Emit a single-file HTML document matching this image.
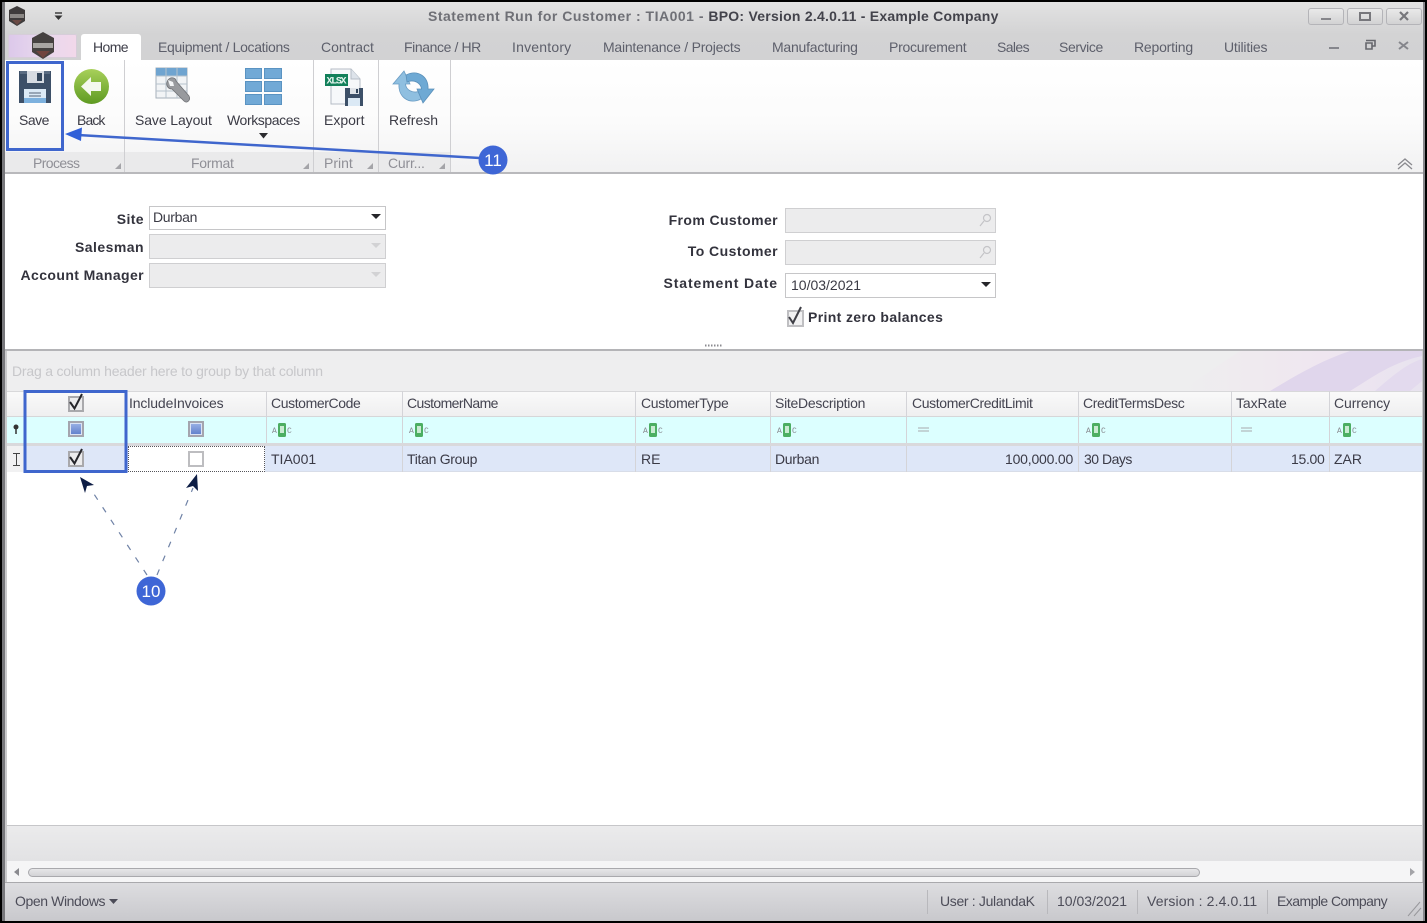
<!DOCTYPE html>
<html><head><meta charset="utf-8"><title>Statement Run</title>
<style>
html,body{margin:0;padding:0;background:#000}
#p{position:relative;width:1427px;height:923px;overflow:hidden;background:#000;font-family:"Liberation Sans",sans-serif;font-size:14px;color:#3b3b45;filter:blur(.35px)}
#p div,#p span.t{position:absolute}
.t{white-space:nowrap;line-height:16px}
.tab{color:#5d5f6b}
.lb{font-weight:bold;color:#33333d;letter-spacing:.4px;text-align:right}
.h{color:#444450;top:395px}
.c{color:#3a3a46;top:451px}
.g{color:#8f8f96;top:155px}
.s{color:#4c4c58;top:893px}
.vl{width:1px;background:#d4d4d8}
svg{position:absolute;overflow:visible}
</style></head><body><div id="p">
<!-- frame -->
<div style="left:2px;top:2px;width:1423px;height:919px;background:#c9c9cb"></div>
<div style="left:2px;top:2px;width:1423px;height:32px;background:linear-gradient(#e2e2e2,#d3d3d4)"></div>
<div style="left:2px;top:34px;width:1423px;height:26px;background:linear-gradient(#d3d3d4,#d2d2d3)"></div>
<div style="left:2px;top:2px;width:3px;height:919px;background:#77777b"></div>
<div style="left:1423px;top:2px;width:2px;height:919px;background:#88888c"></div>
<!-- title -->
<svg style="left:8px;top:6px" width="20" height="20" viewBox="0 0 20 20"><path d="M9 0L17 4V15L9 20L1 15V4Z" fill="#3f3c3c"/><path d="M2 8H16V12H2Z" fill="#8b8885"/><path d="M4 14H14L9 19Z" fill="#6b4a44"/></svg>
<svg style="left:54px;top:12px" width="9" height="9" viewBox="0 0 9 9"><path d="M1 1H8" stroke="#333" stroke-width="1.4"/><path d="M0.5 3.5H8.5L4.5 8Z" fill="#333"/></svg>
<span class="t" style="left:428px;top:8px;font-weight:bold;color:#6f7076;font-size:14px;letter-spacing:.5px">Statement Run for Customer : TIA001 - <span style="color:#43434b;letter-spacing:.24px">BPO: Version 2.4.0.11 - Example Company</span></span>
<!-- window buttons -->
<div style="left:1308px;top:8px;width:34px;height:15px;border:1px solid #b4b4b8;border-radius:3px;background:linear-gradient(#e9e9e9,#d2d2d3)"></div>
<div style="left:1321px;top:18px;width:10px;height:2px;background:#85858a"></div>
<div style="left:1347px;top:8px;width:34px;height:15px;border:1px solid #b4b4b8;border-radius:3px;background:linear-gradient(#e9e9e9,#d2d2d3)"></div>
<div style="left:1359px;top:12px;width:8px;height:5px;border:2px solid #77777c"></div>
<div style="left:1386px;top:8px;width:34px;height:15px;border:1px solid #b4b4b8;border-radius:3px;background:linear-gradient(#e9e9e9,#d2d2d3)"></div>
<svg style="left:1399px;top:11px" width="10" height="10" viewBox="0 0 10 10"><path d="M1 1L9 9M9 1L1 9" stroke="#77777c" stroke-width="2.2"/></svg>
<svg style="left:1329px;top:38px" width="90" height="14" viewBox="0 0 90 14"><path d="M0 10H10" stroke="#85868c" stroke-width="2"/><path d="M37 2.5H46V8H43M37 5V11H43V5Z" fill="none" stroke="#66676d" stroke-width="1.6"/><path d="M70 4L79 11M79 4L70 11" stroke="#85868c" stroke-width="2"/></svg>
<!-- app button & tabs -->
<div style="left:8px;top:34px;width:69px;height:24px;background:linear-gradient(90deg,#dcc8ea,#e8d8ee 50%,#f2d8ea);border-radius:2px 2px 0 0;box-shadow:inset 0 0 0 1px #d6cdd9"></div>
<svg style="left:30px;top:32px" width="26" height="27" viewBox="0 0 26 27"><path d="M13 0L24 6V20L13 27L2 20V6Z" fill="#454140"/><path d="M3 11H23V16H3Z" fill="#a8a5a2"/><path d="M6 19H20L13 26Z" fill="#70443e"/></svg>
<div style="left:81px;top:34px;width:60px;height:27px;background:#fff;border-radius:3px 3px 0 0"></div>
<span class="t" style="left:93px;top:39px;color:#3d3d48;letter-spacing:-.6px">Home</span>
<span class="t tab" style="left:158px;top:39px;letter-spacing:-.33px">Equipment / Locations</span>
<span class="t tab" style="left:321px;top:39px">Contract</span>
<span class="t tab" style="left:404px;top:39px;letter-spacing:-.4px">Finance / HR</span>
<span class="t tab" style="left:512px;top:39px;letter-spacing:.2px">Inventory</span>
<span class="t tab" style="left:603px;top:39px;letter-spacing:-.23px">Maintenance / Projects</span>
<span class="t tab" style="left:772px;top:39px;letter-spacing:-.23px">Manufacturing</span>
<span class="t tab" style="left:889px;top:39px;letter-spacing:-.25px">Procurement</span>
<span class="t tab" style="left:997px;top:39px;letter-spacing:-.6px">Sales</span>
<span class="t tab" style="left:1059px;top:39px;letter-spacing:-.4px">Service</span>
<span class="t tab" style="left:1134px;top:39px;letter-spacing:-.2px">Reporting</span>
<span class="t tab" style="left:1224px;top:39px;letter-spacing:-.2px">Utilities</span>
<!-- ribbon -->
<div style="left:5px;top:60px;width:1418px;height:113px;background:linear-gradient(#ffffff 0,#fbfbfb 55%,#f1f1f2 100%)"></div>
<div style="left:5px;top:152px;width:446px;height:20px;background:#eaeaeb"></div>
<div style="left:5px;top:172px;width:1418px;height:2px;background:#b9b9bc"></div>
<div class="vl" style="left:124px;top:60px;height:112px;background:#cfcfd2"></div>
<div class="vl" style="left:313px;top:60px;height:112px;background:#cfcfd2"></div>
<div class="vl" style="left:378px;top:60px;height:112px;background:#cfcfd2"></div>
<div class="vl" style="left:450px;top:60px;height:112px;background:#cfcfd2"></div>
<!-- save icon -->
<svg style="left:18px;top:70px" width="34" height="34" viewBox="0 0 34 34"><path d="M1 1H33V33H1Z" fill="#3d5068"/><path d="M2 1H32V4H2Z" fill="#5a6c82"/><path d="M9 1H26V13H9Z" fill="#d6dbe2"/><path d="M19 3H24V11H19Z" fill="#33465c"/><path d="M6 19H28V33H6Z" fill="#dbe9f5"/><path d="M6 28H28V33H6Z" fill="#7db1de"/><path d="M11 23H23M11 26H23" stroke="#6f7f91" stroke-width="1.3"/></svg>
<!-- back icon -->
<svg style="left:73px;top:68px" width="37" height="37" viewBox="0 0 37 37"><defs><linearGradient id="g1" x1="0" y1="0" x2="0" y2="1"><stop offset="0" stop-color="#a8d05a"/><stop offset="1" stop-color="#5e9a22"/></linearGradient></defs><circle cx="18.500" cy="18.500" r="17.500" fill="url(#g1)"/><path d="M8 18.500L18 9V14H28V23H18V28Z" fill="#f4f8ee"/></svg>
<!-- save layout icon -->
<svg style="left:155px;top:67px" width="38" height="38" viewBox="0 0 38 38"><path d="M1 1H32V31H1Z" fill="#f2f4f6" stroke="#a6b0ba"/><path d="M1 1H32V9H1Z" fill="#6fa4d0"/><path d="M11 1V31M22 1V31M1 9H32M1 17H32M1 24H32" stroke="#b6c2cc" fill="none"/><path d="M13 13C16 9 21 11 21 14L34 29C36 33 32 37 29 34L17 22C13 22 10 18 13 13Z" fill="#989a9e" stroke="#6f7175" stroke-width=".8"/><path d="M13 13L18 15L19 19L15 19Z" fill="#f2f4f6"/></svg>
<!-- workspaces icon -->
<svg style="left:245px;top:68px" width="37" height="37" viewBox="0 0 37 37"><g fill="#71a9d6" stroke="#5a93c2"><path d="M.5 .5H16.500V10.500H.5Z"/><path d="M19.500 .5H36.500V10.500H19.500Z"/><path d="M.5 13.500H16.500V23.500H.5Z"/><path d="M19.500 13.500H36.500V23.500H19.500Z"/><path d="M.5 26.500H16.500V36.500H.5Z"/><path d="M19.500 26.500H36.500V36.500H19.500Z"/></g></svg>
<svg style="left:259px;top:133px" width="9" height="6" viewBox="0 0 9 6"><path d="M0 0H9L4.500 5.500Z" fill="#2c2c30"/></svg>
<!-- export icon -->
<svg style="left:325px;top:68px" width="39" height="38" viewBox="0 0 39 38"><path d="M6 1H26L35 11V36H6Z" fill="#f6f8fa" stroke="#b5bcc5"/><path d="M26 1V11H35" fill="#dde3ea" stroke="#b5bcc5"/><rect x="0" y="6" width="23" height="12" fill="#12805a"/><text x="1.500" y="15.500" font-family="Liberation Mono,monospace" font-size="10" font-weight="bold" fill="#e6f5ef" textLength="20">XLSX</text><path d="M20 20H38V38H20Z" fill="#3d5068"/><path d="M25 20H34V26H25Z" fill="#e0e4e9"/><path d="M31 21H33V25H31Z" fill="#33465c"/><path d="M23 30H35V38H23Z" fill="#dbe9f5"/></svg>
<!-- refresh icon -->
<svg style="left:393px;top:70px" width="41" height="34" viewBox="0 0 41 34"><path d="M0 14L11 1L17 14H12.500C13 20 20 24 27 21L28 29C16 35 5 27 6 14Z" fill="#8fbfe0" stroke="#6a9cc4" stroke-width=".8"/><path d="M41 19L30 33L24 19H28.500C28 13 21 9 14 12L13 5C25 -1 36 7 35 19Z" fill="#6ea9d4" stroke="#5a90ba" stroke-width=".8"/></svg>
<span class="t" style="left:19px;top:112px;letter-spacing:-.5px">Save</span>
<span class="t" style="left:77px;top:112px;letter-spacing:-.9px">Back</span>
<span class="t" style="left:135px;top:112px;letter-spacing:-.1px">Save Layout</span>
<span class="t" style="left:227px;top:112px;letter-spacing:-.4px">Workspaces</span>
<span class="t" style="left:324px;top:112px">Export</span>
<span class="t" style="left:389px;top:112px">Refresh</span>
<span class="t g" style="left:33px;letter-spacing:-.6px">Process</span>
<span class="t g" style="left:191px;letter-spacing:-.3px">Format</span>
<span class="t g" style="left:324px">Print</span>
<span class="t g" style="left:388px;letter-spacing:-.2px">Curr...</span>
<svg style="left:0;top:0" width="1427" height="180"><g fill="#a4a4a8"><path d="M121 163V169H115Z"/><path d="M309 163V169H303Z"/><path d="M373 163V169H367Z"/><path d="M445 163V169H439Z"/></g><path d="M1398 165L1405 159L1412 165M1398 169L1405 163L1412 169" fill="none" stroke="#8a8a8f" stroke-width="1.300"/></svg>
<!-- form -->
<div style="left:5px;top:174px;width:1418px;height:175px;background:#fff"></div>
<div style="left:5px;top:349px;width:1418px;height:2px;background:#b4b4b7"></div>
<span class="t lb" style="left:44px;width:100px;top:211px">Site</span>
<span class="t lb" style="left:44px;width:100px;top:239px;letter-spacing:.45px">Salesman</span>
<span class="t lb" style="left:4px;width:140px;top:267px">Account Manager</span>
<div style="left:149px;top:206px;width:235px;height:22px;border:1px solid #c6c6c8;background:#fff"></div>
<span class="t" style="left:153px;top:209px;letter-spacing:-.3px">Durban</span>
<svg style="left:371px;top:214px" width="10" height="6"><path d="M0 0H10L5 5Z" fill="#26262a"/></svg>
<div style="left:149px;top:234px;width:235px;height:23px;border:1px solid #cfcfd1;background:#ececed"></div>
<svg style="left:371px;top:243px" width="10" height="6"><path d="M0 0H10L5 5Z" fill="#d2d2d4"/></svg>
<div style="left:149px;top:263px;width:235px;height:23px;border:1px solid #cfcfd1;background:#ececed"></div>
<svg style="left:371px;top:272px" width="10" height="6"><path d="M0 0H10L5 5Z" fill="#d2d2d4"/></svg>
<span class="t lb" style="left:618px;width:160px;top:212px;letter-spacing:.4px">From Customer</span>
<span class="t lb" style="left:618px;width:160px;top:243px;letter-spacing:.45px">To Customer</span>
<span class="t lb" style="left:618px;width:160px;top:275px;letter-spacing:.9px">Statement Date</span>
<div style="left:785px;top:208px;width:209px;height:23px;border:1px solid #cfcfd1;background:#ececed"></div>
<div style="left:785px;top:240px;width:209px;height:23px;border:1px solid #cfcfd1;background:#ececed"></div>
<svg style="left:978px;top:213px" width="14" height="46" viewBox="0 0 14 46" fill="none" stroke="#c4c4c7" stroke-width="1.2"><circle cx="9" cy="5" r="3.500"/><path d="M6 8L2 13"/><circle cx="9" cy="37" r="3.500"/><path d="M6 40L2 45"/></svg>
<div style="left:785px;top:273px;width:209px;height:23px;border:1px solid #c6c6c8;background:#fff"></div>
<span class="t" style="left:791px;top:277px">10/03/2021</span>
<svg style="left:981px;top:282px" width="10" height="6"><path d="M0 0H10L5 5Z" fill="#26262a"/></svg>
<div style="left:787px;top:310px;width:13px;height:13px;border:2px solid #bfbfc2;background:#f1f1f2"></div>
<svg style="left:786px;top:306px" width="18" height="20" viewBox="0 0 18 20"><path d="M3 11L7 17L15 1" fill="none" stroke="#3f3f46" stroke-width="2"/></svg>
<span class="t lb" style="left:808px;top:309px;letter-spacing:.36px">Print zero balances</span>
<svg style="left:705px;top:344px" width="18" height="4"><path d="M0 1.500H17" stroke="#8b8b90" stroke-width="2" stroke-dasharray="1.500 1.500"/></svg>
<!-- grid -->
<div style="left:7px;top:351px;width:1415px;height:40px;background:#eeeeef"></div>
<svg style="left:1180px;top:351px" width="242" height="40" viewBox="0 0 242 40"><defs><linearGradient id="g2" x1="0" y1="0" x2="1" y2="0"><stop offset="0" stop-color="#f1e6ee" stop-opacity="0"/><stop offset=".6" stop-color="#efe6f0"/><stop offset="1" stop-color="#e8e3ef"/></linearGradient></defs><path d="M0 40L60 0H242V40Z" fill="url(#g2)"/><path d="M90 40C115 25 140 10 170 0H242V5C210 12 190 28 170 40Z" fill="#e0d6ec"/><path d="M195 40C212 25 228 12 242 8V30L230 40Z" fill="#e3daee"/></svg>
<span class="t" style="left:12px;top:363px;color:#c7c7ca;letter-spacing:-.2px">Drag a column header here to group by that column</span>
<div style="left:7px;top:391px;width:1415px;height:25px;background:linear-gradient(#fafafa,#efeff0);box-shadow:inset 0 1px 0 #d8d8da"></div>
<div style="left:7px;top:416px;width:1415px;height:27px;background:#dcffff;border-top:1px solid #d6d6d8;box-sizing:border-box"></div>
<div style="left:7px;top:443px;width:1415px;height:3px;background:#d9d9dc"></div>
<div style="left:7px;top:446px;width:1415px;height:26px;background:#dee7f8;border-bottom:1px solid #d8dde8;box-sizing:border-box"></div>
<div style="left:7px;top:472px;width:1415px;height:353px;background:#fff"></div>
<div style="left:7px;top:446px;width:18px;height:26px;background:#f1f1f2"></div>
<div style="left:128px;top:446px;width:137px;height:26px;background:#fff;outline:1px dotted #55555a;outline-offset:-1px"></div>
<div class="vl" style="left:266px;top:391px;height:52px"></div><div class="vl" style="left:402px;top:391px;height:52px"></div><div class="vl" style="left:635px;top:391px;height:52px"></div><div class="vl" style="left:770px;top:391px;height:52px"></div><div class="vl" style="left:906px;top:391px;height:52px"></div><div class="vl" style="left:1078px;top:391px;height:52px"></div><div class="vl" style="left:1231px;top:391px;height:52px"></div><div class="vl" style="left:1329px;top:391px;height:52px"></div>
<div class="vl" style="left:402px;top:446px;height:26px"></div><div class="vl" style="left:635px;top:446px;height:26px"></div><div class="vl" style="left:770px;top:446px;height:26px"></div><div class="vl" style="left:906px;top:446px;height:26px"></div><div class="vl" style="left:1078px;top:446px;height:26px"></div><div class="vl" style="left:1231px;top:446px;height:26px"></div><div class="vl" style="left:1329px;top:446px;height:26px"></div>
<span class="t h" style="left:129px;letter-spacing:-.13px">IncludeInvoices</span>
<span class="t h" style="left:271px;letter-spacing:-.4px">CustomerCode</span>
<span class="t h" style="left:407px;letter-spacing:-.6px">CustomerName</span>
<span class="t h" style="left:641px;letter-spacing:-.3px">CustomerType</span>
<span class="t h" style="left:775px;letter-spacing:-.27px">SiteDescription</span>
<span class="t h" style="left:912px;letter-spacing:-.37px">CustomerCreditLimit</span>
<span class="t h" style="left:1083px;letter-spacing:-.4px">CreditTermsDesc</span>
<span class="t h" style="left:1236px;letter-spacing:-.1px">TaxRate</span>
<span class="t h" style="left:1334px;letter-spacing:-.1px">Currency</span>
<span class="t c" style="left:271px">TIA001</span>
<span class="t c" style="left:407px;letter-spacing:-.3px">Titan Group</span>
<span class="t c" style="left:641px">RE</span>
<span class="t c" style="left:775px;letter-spacing:-.3px">Durban</span>
<span class="t c" style="left:1005px;letter-spacing:-.2px">100,000.00</span>
<span class="t c" style="left:1084px;letter-spacing:-.5px">30 Days</span>
<span class="t c" style="left:1291px;letter-spacing:-.3px">15.00</span>
<span class="t c" style="left:1334px">ZAR</span>
<!-- abc filter icons -->
<svg style="left:0;top:416px" width="1427" height="27">
<defs><g id="abc"><rect x="7" y="7" width="8" height="14" rx="1.500" fill="#4cae62"/><rect x="9" y="10" width="4" height="7" fill="#c9ebd2"/><text x="1" y="17" font-family="Liberation Mono,monospace" font-size="8" fill="#86868c">A</text><text x="16" y="17" font-family="Liberation Mono,monospace" font-size="8" fill="#86868c">C</text></g></defs>
<use href="#abc" x="271"/><use href="#abc" x="408"/><use href="#abc" x="642"/><use href="#abc" x="776"/><use href="#abc" x="1085"/><use href="#abc" x="1336"/>
<path d="M918 12H929M918 15H929M1241 12H1252M1241 15H1252" stroke="#a8a8ac" stroke-width="1"/>
<circle cx="16" cy="11" r="2.500" fill="#333"/><path d="M16 12V18" stroke="#333" stroke-width="1.500"/>
</svg>
<svg style="left:12px;top:453px" width="9" height="13"><path d="M1 .5H8M4.500 .5V12.500M1 12.500H8" stroke="#444" fill="none"/></svg>
<!-- checkboxes -->
<div style="left:68px;top:396px;width:12px;height:12px;border:2px solid #a9a9ac;background:#ececed"></div>
<svg style="left:68px;top:393px" width="18" height="18" viewBox="0 0 18 18"><path d="M2 9L6.500 15.500L14 1" fill="none" stroke="#26262b" stroke-width="2"/></svg>
<div style="left:68px;top:451px;width:12px;height:12px;border:2px solid #a9a9ac;background:#ececed"></div>
<svg style="left:68px;top:448px" width="18" height="18" viewBox="0 0 18 18"><path d="M2 9L6.500 15.500L14 1" fill="none" stroke="#26262b" stroke-width="2"/></svg>
<div style="left:68px;top:421px;width:12px;height:12px;border:2px solid #a4a5ae;background:linear-gradient(#9ab2e6,#5f7fca);box-shadow:inset 0 0 0 1px #dbe3f5"></div>
<div style="left:188px;top:421px;width:12px;height:12px;border:2px solid #a4a5ae;background:linear-gradient(#9ab2e6,#5f7fca);box-shadow:inset 0 0 0 1px #dbe3f5"></div>
<div style="left:188px;top:451px;width:12px;height:12px;border:2px solid #bdbdc0;background:#fff"></div>
<!-- footer -->
<div style="left:7px;top:825px;width:1415px;height:36px;background:linear-gradient(#ebebec,#e2e2e4);border-top:1px solid #c6c6c9;box-sizing:border-box"></div>
<div style="left:7px;top:861px;width:1415px;height:21px;background:#f5f5f6"></div>
<div style="left:5px;top:882px;width:1418px;height:1px;background:#a9a9ac"></div>
<div style="left:28px;top:868px;width:1170px;height:7px;border:1px solid #a9a9ad;border-radius:5px;background:linear-gradient(#e6e6e8,#d3d3d6)"></div>
<svg style="left:0;top:860px" width="1427" height="24"><path d="M19 8V16L14 12Z" fill="#8a8a8f"/><path d="M1410 8V16L1415 12Z" fill="#a4a4a8"/></svg>
<!-- status -->
<div style="left:5px;top:883px;width:1418px;height:37px;background:linear-gradient(#dddde0,#c9c9cd)"></div>
<span class="t s" style="left:15px;letter-spacing:-.4px">Open Windows</span>
<svg style="left:109px;top:899px" width="9" height="6"><path d="M0 0H9L4.500 5Z" fill="#4c4c58"/></svg>
<div class="vl" style="left:927px;top:890px;height:24px;background:#b8b8bc"></div>
<div class="vl" style="left:1047px;top:890px;height:24px;background:#b8b8bc"></div>
<div class="vl" style="left:1137px;top:890px;height:24px;background:#b8b8bc"></div>
<div class="vl" style="left:1267px;top:890px;height:24px;background:#b8b8bc"></div>
<span class="t s" style="left:940px;letter-spacing:-.33px">User : JulandaK</span>
<span class="t s" style="left:1057px">10/03/2021</span>
<span class="t s" style="left:1147px;letter-spacing:.13px">Version : 2.4.0.11</span>
<span class="t s" style="left:1277px;letter-spacing:-.55px">Example Company</span>
<svg style="left:1406px;top:900px" width="16" height="18"><path d="M2 16L14 2M8 16L15 8" stroke="#98989c" stroke-width="1"/></svg>
<!-- annotations -->
<svg style="left:0;top:0" width="1427" height="923">
<g fill="none" stroke="#3f66cd" stroke-width="3"><rect x="7.500" y="62.500" width="55" height="87"/><rect x="25" y="391.500" width="101" height="80"/></g>
<path d="M480 158L78 135" stroke="#3f66cd" stroke-width="2.500"/>
<path d="M65 134L82 127.500L81 141Z" fill="#3060d8"/>
<circle cx="493" cy="160" r="14.500" fill="#3e66d6"/>
<g stroke="#6f82a6" stroke-width="1.200" stroke-dasharray="6 9" fill="none"><path d="M147 575L92 491"/><path d="M157 575L193 488"/></g>
<path d="M80 477L94 485L87 486L85 493Z" fill="#0d1d45"/>
<path d="M197 474L198 491L193 486L186 488Z" fill="#0d1d45"/>
<circle cx="151" cy="591" r="14.500" fill="#3e66d6"/>
<text x="493" y="166" font-family="Liberation Sans,sans-serif" font-size="17" fill="#fff" text-anchor="middle">11</text>
<text x="151" y="597" font-family="Liberation Sans,sans-serif" font-size="17" fill="#fff" text-anchor="middle">10</text>
</svg>
</div></body></html>
